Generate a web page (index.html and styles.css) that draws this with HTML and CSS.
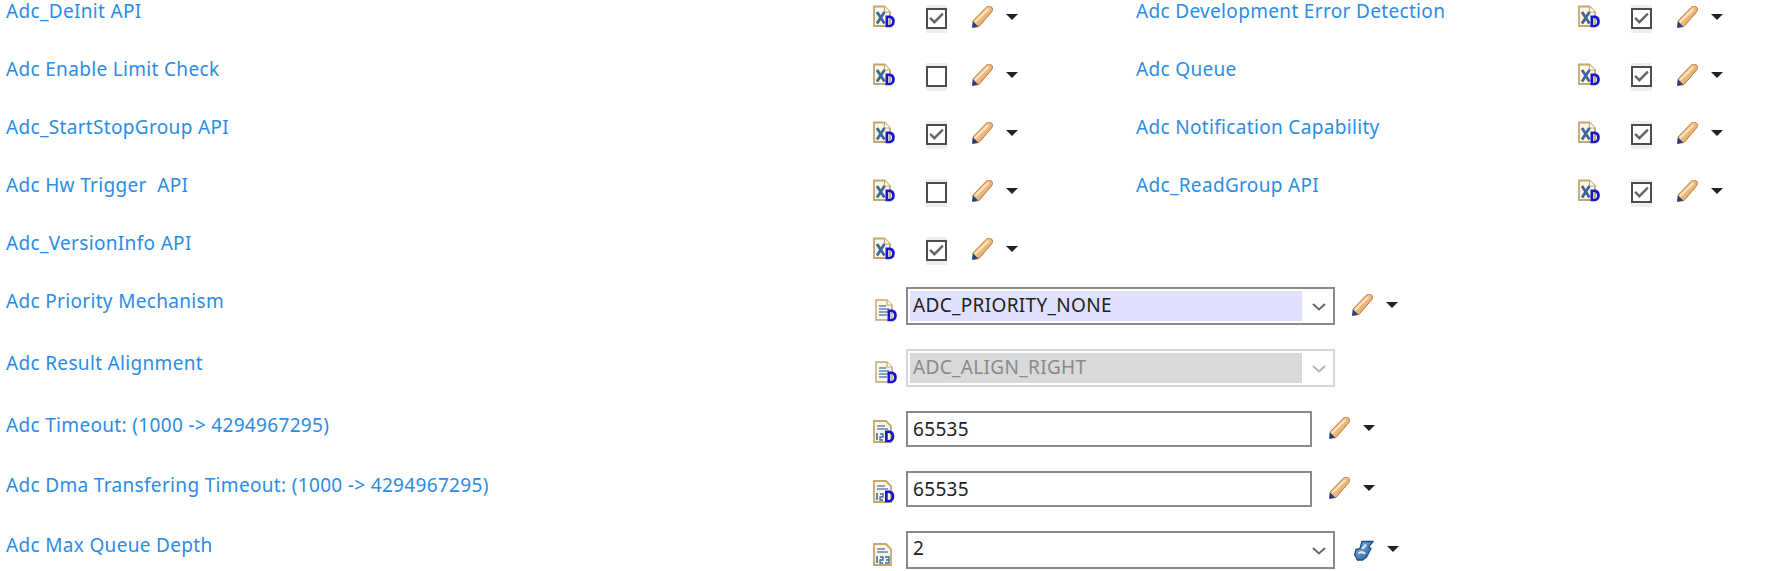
FILE: index.html
```html
<!DOCTYPE html>
<html lang="en">
<head>
<meta charset="utf-8">
<title>Adc General</title>
<link rel="stylesheet" href="styles.css">
</head>
<body>
<svg class="defs" aria-hidden="true">
  <defs>
    <linearGradient id="pen" x1="0" y1="0" x2="1" y2="1">
      <stop offset="0" stop-color="#f8d9a8"/><stop offset="1" stop-color="#e09a50"/>
    </linearGradient>
    <linearGradient id="wr" x1="0" y1="0" x2="1" y2="1">
      <stop offset="0" stop-color="#8fb4d8"/><stop offset="1" stop-color="#1f5a96"/>
    </linearGradient>
    <symbol id="doc-x" viewBox="0 0 22 23">
      <path d="M1 1.500h10.500l5.500 5.500v14H1z" fill="#faf6ea" stroke="#c2a86c" stroke-width="1.800"/>
      <path d="M11.500 1.500v5.500h5.500" fill="#fff" stroke="#c2a86c" stroke-width="1.200"/>
      <path d="M4 7l7.500 11.500M11.500 7L4 18.500" fill="none" stroke="#3d6796" stroke-width="2.800"/>
      <path d="M12.500 10.500h3.500c4 0 5.800 2.300 5.800 5.700s-1.800 6-5.800 6h-3.500zM15.200 13v7c2.700.2 3.800-1.200 3.800-3.600s-1.100-3.600-3.800-3.400z" fill="#1414d2" fill-rule="evenodd"/>
    </symbol>
    <symbol id="doc-t" viewBox="0 0 22 23">
      <path d="M1 1h11l5 5v15H1z" fill="#faf6ea" stroke="#c2a86c" stroke-width="1.400"/>
      <path d="M12 1v5h5" fill="#fff" stroke="#c2a86c" stroke-width="1.200"/>
      <path d="M4 7h7M4 10h10M4 13h10M4 16h8" stroke="#5f86b8" stroke-width="1.600"/>
      <path d="M12.500 10.500h3.500c4 0 5.800 2.300 5.800 5.700s-1.800 6-5.800 6h-3.500zM15.200 13v7c2.700.2 3.800-1.200 3.800-3.600s-1.100-3.600-3.800-3.400z" fill="#1414d2" fill-rule="evenodd"/>
    </symbol>
    <symbol id="doc-n" viewBox="0 0 22 23">
      <path d="M1 1h12l5 5v16H1z" fill="#faf6ea" stroke="#c2a86c" stroke-width="1.800"/>
      <path d="M4 6h8M4 9h11" stroke="#5f86b8" stroke-width="1.500"/>
      <path d="M4 13v7" stroke="#3d6796" stroke-width="1.600"/>
      <path d="M7 14h3v3H7v3h3M12 14h4v3h-3 3v3h-4" fill="none" stroke="#3d6796" stroke-width="1.300"/>
    </symbol>
    <symbol id="doc-nd" viewBox="0 0 22 23">
      <path d="M1 1h12l5 5v16H1z" fill="#faf6ea" stroke="#c2a86c" stroke-width="1.800"/>
      <path d="M4 6h8M4 9h11" stroke="#5f86b8" stroke-width="1.500"/>
      <path d="M4 13v7" stroke="#3d6796" stroke-width="1.600"/>
      <path d="M7 14h3v3H7v3h3" fill="none" stroke="#3d6796" stroke-width="1.300"/>
      <path d="M12 10.500h3.500c4 0 5.800 2.300 5.800 5.700s-1.800 6-5.800 6H12zM14.700 13v7c2.700.2 3.800-1.200 3.800-3.600s-1.100-3.600-3.800-3.400z" fill="#1414d2" fill-rule="evenodd"/>
    </symbol>
    <symbol id="pencil" viewBox="0 0 21 22">
      <path d="M1 15L14 1.500c1.900-1.900 3.900-2 5.400-.6s1.500 3.500 0 5.200L7 20.500 1 21.500z" fill="url(#pen)" stroke="#b8763a" stroke-width="1"/>
      <path d="M3 16L16.500 3" stroke="#fbe6c4" stroke-width="1.800" fill="none"/>
      <path d="M1 15.500l-1 6.300 6.300-1.200z" fill="#1c3f8f"/>
    </symbol>
    <symbol id="wrench" viewBox="0 0 20 21">
      <path d="M8 1.500h11l-4.500 5.500 2.500 1.500-4.500 8.500-4 3H3.500L.7 15 2 9.500 6 8.500z" fill="url(#wr)" stroke="#1b4f86" stroke-width="1.300"/>
      <path d="M4.500 13.500c2-2 5-1.800 6.500.5M8 8.500c2-1 3-2 4-4" fill="none" stroke="#dce9f5" stroke-width="2.200"/>
    </symbol>
    <symbol id="check" viewBox="0 0 16 16">
      <path d="M2 7.500l4 4L14 3.500" fill="none" stroke="#666" stroke-width="2.300"/>
    </symbol>
    <symbol id="chev" viewBox="0 0 14 8">
      <path d="M1 1l6 5.500L13 1" fill="none" stroke="currentColor" stroke-width="2"/>
    </symbol>
  </defs>
</svg>

<main class="page">
  <section class="checks">
    <div class="field">
      <div class="label label-left">Adc_DeInit API</div>
      <svg class="ico ico-doc"><use href="#doc-x"/></svg>
      <div class="box"><svg class="tick"><use href="#check"/></svg></div>
      <svg class="ico ico-pen"><use href="#pencil"/></svg>
      <span class="caret"></span>
    </div>
    <div class="field">
      <div class="label label-right">Adc Development Error Detection</div>
      <svg class="ico ico-doc"><use href="#doc-x"/></svg>
      <div class="box"><svg class="tick"><use href="#check"/></svg></div>
      <svg class="ico ico-pen"><use href="#pencil"/></svg>
      <span class="caret"></span>
    </div>
    <div class="field">
      <div class="label label-left">Adc Enable Limit Check</div>
      <svg class="ico ico-doc"><use href="#doc-x"/></svg>
      <div class="box"></div>
      <svg class="ico ico-pen"><use href="#pencil"/></svg>
      <span class="caret"></span>
    </div>
    <div class="field">
      <div class="label label-right">Adc Queue</div>
      <svg class="ico ico-doc"><use href="#doc-x"/></svg>
      <div class="box"><svg class="tick"><use href="#check"/></svg></div>
      <svg class="ico ico-pen"><use href="#pencil"/></svg>
      <span class="caret"></span>
    </div>
    <div class="field">
      <div class="label label-left">Adc_StartStopGroup API</div>
      <svg class="ico ico-doc"><use href="#doc-x"/></svg>
      <div class="box"><svg class="tick"><use href="#check"/></svg></div>
      <svg class="ico ico-pen"><use href="#pencil"/></svg>
      <span class="caret"></span>
    </div>
    <div class="field">
      <div class="label label-right">Adc Notification Capability</div>
      <svg class="ico ico-doc"><use href="#doc-x"/></svg>
      <div class="box"><svg class="tick"><use href="#check"/></svg></div>
      <svg class="ico ico-pen"><use href="#pencil"/></svg>
      <span class="caret"></span>
    </div>
    <div class="field">
      <div class="label label-left">Adc Hw Trigger&nbsp; API</div>
      <svg class="ico ico-doc"><use href="#doc-x"/></svg>
      <div class="box"></div>
      <svg class="ico ico-pen"><use href="#pencil"/></svg>
      <span class="caret"></span>
    </div>
    <div class="field">
      <div class="label label-right">Adc_ReadGroup API</div>
      <svg class="ico ico-doc"><use href="#doc-x"/></svg>
      <div class="box"><svg class="tick"><use href="#check"/></svg></div>
      <svg class="ico ico-pen"><use href="#pencil"/></svg>
      <span class="caret"></span>
    </div>
    <div class="field">
      <div class="label label-left">Adc_VersionInfo API</div>
      <svg class="ico ico-doc"><use href="#doc-x"/></svg>
      <div class="box"><svg class="tick"><use href="#check"/></svg></div>
      <svg class="ico ico-pen"><use href="#pencil"/></svg>
      <span class="caret"></span>
    </div>
  </section>

  <section class="rows">
    <div class="row">
      <div class="label label-left row-label">Adc Priority Mechanism</div>
      <svg class="ico ico-row ico-combo"><use href="#doc-t"/></svg>
      <div class="control combo">
        <div class="value value-hl">ADC_PRIORITY_NONE</div>
        <svg class="chev"><use href="#chev"/></svg>
      </div>
      <svg class="ico ico-pen-row pen-combo"><use href="#pencil"/></svg>
      <span class="caret caret-combo"></span>
    </div>
    <div class="row">
      <div class="label label-left row-label">Adc Result Alignment</div>
      <svg class="ico ico-row ico-combo"><use href="#doc-t"/></svg>
      <div class="control combo disabled">
        <div class="value value-off">ADC_ALIGN_RIGHT</div>
        <svg class="chev"><use href="#chev"/></svg>
      </div>
    </div>
    <div class="row row-input">
      <div class="label label-left row-label">Adc Timeout: (1000 -&gt; 4294967295)</div>
      <svg class="ico ico-row ico-text"><use href="#doc-nd"/></svg>
      <div class="control text"><div class="value">65535</div></div>
      <svg class="ico ico-pen-row pen-text"><use href="#pencil"/></svg>
      <span class="caret caret-text"></span>
    </div>
    <div class="row row-input">
      <div class="label label-left row-label">Adc Dma Transfering Timeout: (1000 -&gt; 4294967295)</div>
      <svg class="ico ico-row ico-text"><use href="#doc-nd"/></svg>
      <div class="control text"><div class="value">65535</div></div>
      <svg class="ico ico-pen-row pen-text"><use href="#pencil"/></svg>
      <span class="caret caret-text"></span>
    </div>
    <div class="row">
      <div class="label label-left row-label">Adc Max Queue Depth</div>
      <svg class="ico ico-row ico-max"><use href="#doc-n"/></svg>
      <div class="control combo">
        <div class="value value-top">2</div>
        <svg class="chev"><use href="#chev"/></svg>
      </div>
      <svg class="ico ico-wrench"><use href="#wrench"/></svg>
      <span class="caret caret-combo"></span>
    </div>
  </section>
</main>
</body>
</html>
```

FILE: styles.css
```css
html, body {
  margin: 0;
  padding: 0;
  background: #fff;
}

body {
  width: 1769px;
  height: 571px;
  overflow: hidden;
  font-family: "Noto Sans", "Noto Sans CJK SC", sans-serif;
  font-size: 19px;
  letter-spacing: 0.33px;
}

.defs {
  width: 0;
  height: 0;
  display: block;
}

.checks {
  display: grid;
  grid-template-columns: 1136px 1fr;
  grid-auto-rows: 58px;
  height: 287px;
}

.field,
.row {
  display: flex;
  align-items: flex-start;
}

.label {
  color: #2b8ce6;
  line-height: 22px;
  white-space: nowrap;
  box-sizing: border-box;
}

.label-left {
  width: 873px;
  padding-left: 6px;
}

.label-right {
  width: 442px;
}

.ico {
  display: block;
  flex: none;
}

.ico-doc {
  width: 22px;
  height: 23px;
  margin-top: 5px;
}

.box {
  width: 21px;
  height: 21px;
  flex: none;
  box-sizing: border-box;
  margin: 8px 0 0 31px;
  border: 2px solid #4d4d4d;
  background: #fff;
  box-shadow: 0 -3px 0 #eee, 0 4px 0 #eee;
}

.tick {
  display: block;
  width: 17px;
  height: 17px;
}

.ico-pen {
  width: 21px;
  height: 22px;
  margin: 6px 0 0 25px;
}

.caret {
  flex: none;
  width: 0;
  height: 0;
  margin: 14px 0 0 13px;
  border-left: 6px solid transparent;
  border-right: 6px solid transparent;
  border-top: 6px solid #222;
}

.row {
  height: 38px;
  margin-bottom: 24px;
}

.row-input {
  height: 36px;
}

.row-label {
  margin-top: 3px;
}

.ico-row {
  width: 22px;
  height: 23px;
  margin-right: 11px;
}

.ico-combo {
  margin-left: 2px;
  margin-right: 9px;
  margin-top: 12px;
}

.ico-text {
  margin-top: 9px;
}

.ico-max {
  margin-top: 12px;
}

.control {
  flex: none;
  box-sizing: border-box;
  display: flex;
  align-items: center;
  border: 2px solid #8a8a8a;
  color: #222;
}

.combo {
  width: 429px;
  height: 38px;
  padding-left: 2px;
}

.text {
  width: 406px;
  height: 36px;
  padding-left: 2px;
}

.value {
  flex: 1;
  height: 30px;
  line-height: 28px;
  padding-left: 3px;
}

.text .value {
  line-height: 30px;
}

.value-top {
  line-height: 26px;
}

.value-hl {
  background: #e0e0ff;
}

.value-off {
  background: #d9d9d9;
  color: #8a8a8a;
}

.disabled {
  border-color: #d6d6d6;
}

.chev {
  flex: none;
  width: 14px;
  height: 8px;
  margin: 2px 7px 0 10px;
  color: #666;
}

.disabled .chev {
  color: #b5b5b5;
}

.ico-pen-row {
  width: 21px;
  height: 22px;
}

.pen-combo {
  margin: 7px 0 0 17px;
}

.pen-text {
  margin: 6px 0 0 17px;
}

.caret-combo {
  margin-top: 15px;
}

.caret-text {
  margin-top: 14px;
}

.ico-wrench {
  width: 20px;
  height: 21px;
  margin: 9px 0 0 19px;
}
```
